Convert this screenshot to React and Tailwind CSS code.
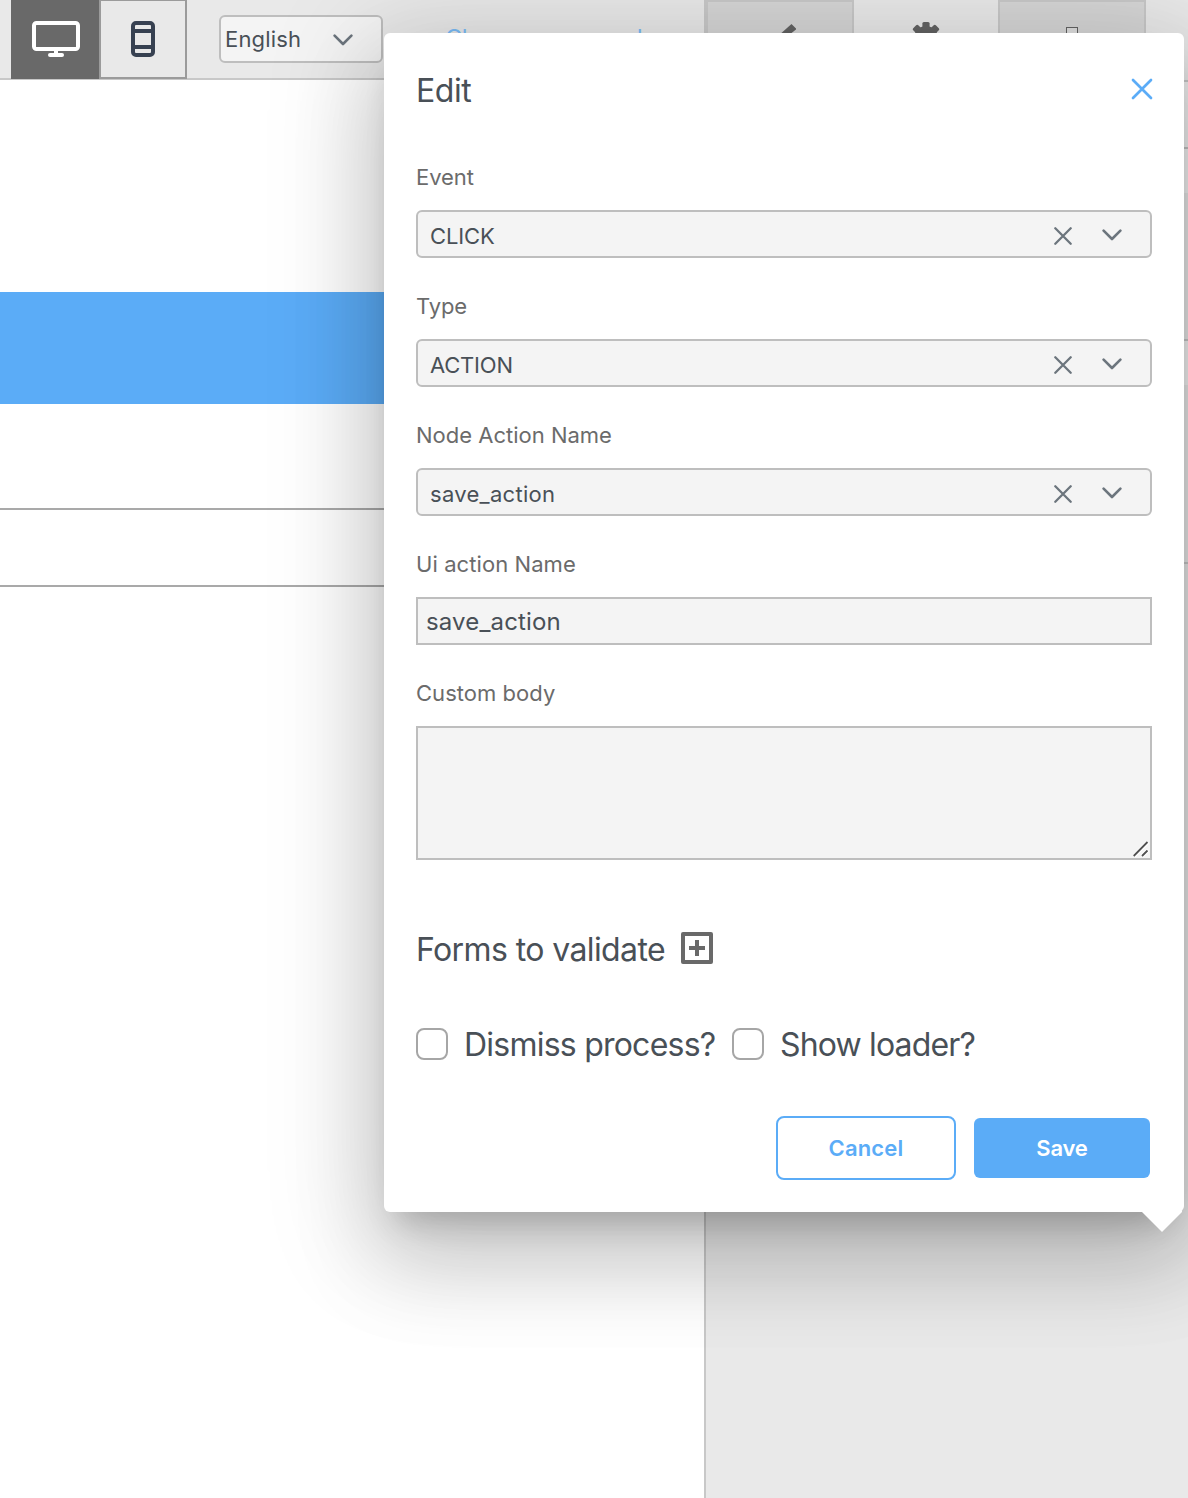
function Monitor() {
  return (
    <svg width="48" height="36" viewBox="0 0 48 36" fill="none">
      <rect x="2" y="2" width="44" height="26" rx="2.5" stroke="#fff" strokeWidth="4" />
      <rect x="22" y="28" width="4" height="6" fill="#fff" />
      <rect x="16" y="32" width="16" height="4" rx="2" fill="#fff" />
    </svg>
  );
}

function Phone() {
  return (
    <svg width="24" height="36" viewBox="0 0 24 36" fill="none" stroke="#374151" strokeWidth="4">
      <rect x="2" y="2" width="20" height="32" rx="3" />
      <path d="M2 10h20M2 26h20" />
    </svg>
  );
}

function Chevron() {
  return (
    <svg width="20" height="12" viewBox="0 0 20 12" fill="none" stroke="#6c757d" strokeWidth="2.6" strokeLinecap="round" strokeLinejoin="round">
      <path d="M1.6 1.6 10 10 18.4 1.6" />
    </svg>
  );
}

function Cross() {
  return (
    <svg width="18" height="18" viewBox="0 0 18 18" fill="none" stroke="#6c757d" strokeWidth="2.3" strokeLinecap="round">
      <path d="M1.3 1.3l15.4 15.4M16.7 1.3L1.3 16.7" />
    </svg>
  );
}

function Gear() {
  return (
    <svg width="32" height="32" viewBox="-16 -16 32 32" fill="#636363">
      <circle r="12" />
      {[0, 45, 90, 135, 180, 225, 270, 315].map((a) => (
        <rect key={a} x="-3.6" y="-16" width="7.2" height="8" rx="1.5" transform={`rotate(${a})`} />
      ))}
      <circle r="5" fill="#e9e9e9" />
    </svg>
  );
}

function Label({ children, spacing = '' }) {
  return <div className={'mb-[19px] h-[26px] text-[22px] leading-[25px] text-[#6b6b6b] ' + spacing}>{children}</div>;
}

function SelectField({ label, value, labelSpacing, valueSpacing }) {
  return (
    <div className="mb-9">
      <Label spacing={labelSpacing}>{label}</Label>
      <div className="flex h-12 items-center rounded-[6px] border-2 border-[#bebebe] bg-[#f4f4f4] pl-3 pr-7">
        <span className={'grow pt-[3px] text-[22px] leading-10 text-[#495057] ' + valueSpacing}>{value}</span>
        <span className="mt-[3px] mr-[30px]"><Cross /></span>
        <span className="mt-px"><Chevron /></span>
      </div>
    </div>
  );
}

function Checkbox({ label, spacing }) {
  return (
    <label className="flex h-8 items-center">
      <span className="mr-4 size-8 shrink-0 rounded-[8px] border-2 border-[#a6a6a6] bg-white" />
      <span className={'whitespace-nowrap pt-[2px] text-[32px] leading-8 ' + spacing}>{label}</span>
    </label>
  );
}

export default function App() {
  return (
    <div className="relative h-[1498px] w-[1188px] overflow-hidden bg-white font-['Inter',sans-serif] text-[#495057]">
      <div className="flex h-full">
        <main className="w-[704px] shrink-0">
          <header className="flex h-20 border-b-2 border-[#c8c8c8] bg-[#e9e9e9] pl-[11px]">
            <div className="flex h-[79px] w-[88px] shrink-0 justify-center bg-[#696969] pt-[21px] pl-[2px]"><Monitor /></div>
            <div className="flex h-[79px] w-[88px] shrink-0 justify-center border-2 border-t-[1px] border-[#9b9b9b] pt-5"><Phone /></div>
            <div className="mt-[15px] ml-8 flex h-12 w-[164px] shrink-0 items-center rounded-[6px] border-2 border-[#bebebe] bg-[#f4f4f4] pl-1 pr-7">
              <span className="grow text-[22px] tracking-[0.17px]">English</span>
              <span className="mt-px"><Chevron /></span>
            </div>
            <div className="ml-[62px] pt-[25px] text-[24px] leading-[27px] tracking-[-0.67px] whitespace-nowrap text-[#7bbcf6]">Choose command</div>
          </header>
          <div className="mt-[212px] h-28 bg-[#5bacf7]" />
          <div className="mt-[104px] h-[79px] border-y-2 border-[#a9a9a9]" />
        </main>
        <aside className="grow border-l-2 border-[#c8c8c8] bg-[#e9e9e9]">
          <div className="flex h-[82px] border-b-2 border-[#c8c8c8]">
            <div className="flex w-[148px] justify-center border-x-2 border-t-2 border-[#c8c8c8] bg-[#d6d6d6] pt-[21px]">
              <svg width="32" height="32" viewBox="0 0 32 32" fill="#636363">
                <path d="M28.5 1l5 5-19 15-4-4zM10 18l4 4c0 5-5 7-11 6 4-3 2-7 7-10z" className="translate-x-[-1px]" />
              </svg>
            </div>
            <div className="flex w-36 justify-center pt-[22px]"><Gear /></div>
            <div className="flex w-[148px] justify-center border-x-2 border-t-2 border-[#c8c8c8] bg-[#d6d6d6] pt-[25px]">
              <div className="h-6 w-3 border border-[#636363] bg-[#dedede]" />
            </div>
          </div>
          <div className="h-[67px] border-b-2 border-[#c4c4c4] bg-[#f1f1f1]" />
          <div className="h-11 bg-[#f4f4f4]" />
          <div className="h-[148px] border-b-2 border-[#c8c8c8]" />
          <div className="h-11 bg-[#f4f4f4]" />
          <div className="h-[179px] border-b-2 border-[#c8c8c8]" />
        </aside>
      </div>

      <section className="absolute top-[33px] left-[384px] h-[1179px] w-[800px] rounded-[6px] bg-white px-8 shadow-[0_22px_30px_-14px_rgba(0,0,0,0.2),0_48px_88px_8px_rgba(0,0,0,0.14),0_18px_106px_20px_rgba(0,0,0,0.13)]">
        <div className="flex h-[132px] items-start justify-between pt-[41px]">
          <h1 className="pt-px text-[32px] leading-8 tracking-[-0.43px]">Edit</h1>
          <svg className="mt-[4px] -mr-px" width="22" height="22" viewBox="0 0 22 22" fill="none" stroke="#5bacf7" strokeWidth="2.7" strokeLinecap="round">
            <path d="M2 2l18 18M20 2L2 20" />
          </svg>
        </div>
        <SelectField label="Event" value="CLICK" labelSpacing="tracking-[-0.05px]" valueSpacing="tracking-[-0.15px]" />
        <SelectField label="Type" value="ACTION" labelSpacing="tracking-[-0.15px]" valueSpacing="tracking-[-0.2px]" />
        <SelectField label="Node Action Name" value="save_action" labelSpacing="tracking-[0px]" valueSpacing="tracking-[0.29px]" />
        <div className="mb-9">
          <Label spacing="tracking-[0.08px]">Ui action Name</Label>
          <div className="h-12 border-2 border-[#bebebe] bg-[#f4f4f4] pl-2 text-[24px] leading-[45px] tracking-[0.15px]">save_action</div>
        </div>
        <Label spacing="tracking-[0.04px]">Custom body</Label>
        <div className="flex h-[134px] items-end justify-end border-2 border-[#bebebe] bg-[#f4f4f4]">
          <svg width="17" height="17" viewBox="0 0 17 17" stroke="#fff" strokeWidth="4">
            <path d="M1 15L15 1M9 15l6-6" />
            <path d="M0.7 15L14.5 1M9 15l5.5-5.5" stroke="#505050" strokeWidth="1.8" />
          </svg>
        </div>
        <div className="mt-[72px] flex h-8 items-center">
          <h2 className="w-[265px] pt-[3px] text-[32px] leading-8 tracking-[-0.6px] whitespace-nowrap">Forms to validate</h2>
          <svg width="32" height="32" viewBox="0 0 32 32" fill="none" stroke="#696969" strokeWidth="4" strokeLinejoin="round">
            <rect x="2" y="2" width="28" height="28" />
            <path d="M16 8v16M8 16h16" />
          </svg>
        </div>
        <div className="mt-16 flex h-8">
          <div className="w-[316px]"><Checkbox label="Dismiss process?" spacing="tracking-[-0.77px]" /></div>
          <Checkbox label="Show loader?" spacing="tracking-[-0.84px]" />
        </div>
        <div className="mt-14 flex items-center justify-end gap-[18px] pr-[2px] text-[22px] font-semibold">
          <button className="h-16 w-[180px] rounded-[8px] border-2 border-[#5bacf7] tracking-[0.17px] text-[#5bacf7]">Cancel</button>
          <button className="h-[60px] w-44 rounded-[6px] bg-[#5bacf7] tracking-[-0.2px] text-white">Save</button>
        </div>
        <svg className="absolute top-[1178px] left-[758px]" width="42" height="22" viewBox="0 0 42 22" fill="#fff">
          <path d="M0 1h40L20 21zM0 0h40v1H0z" />
        </svg>
      </section>
    </div>
  );
}
